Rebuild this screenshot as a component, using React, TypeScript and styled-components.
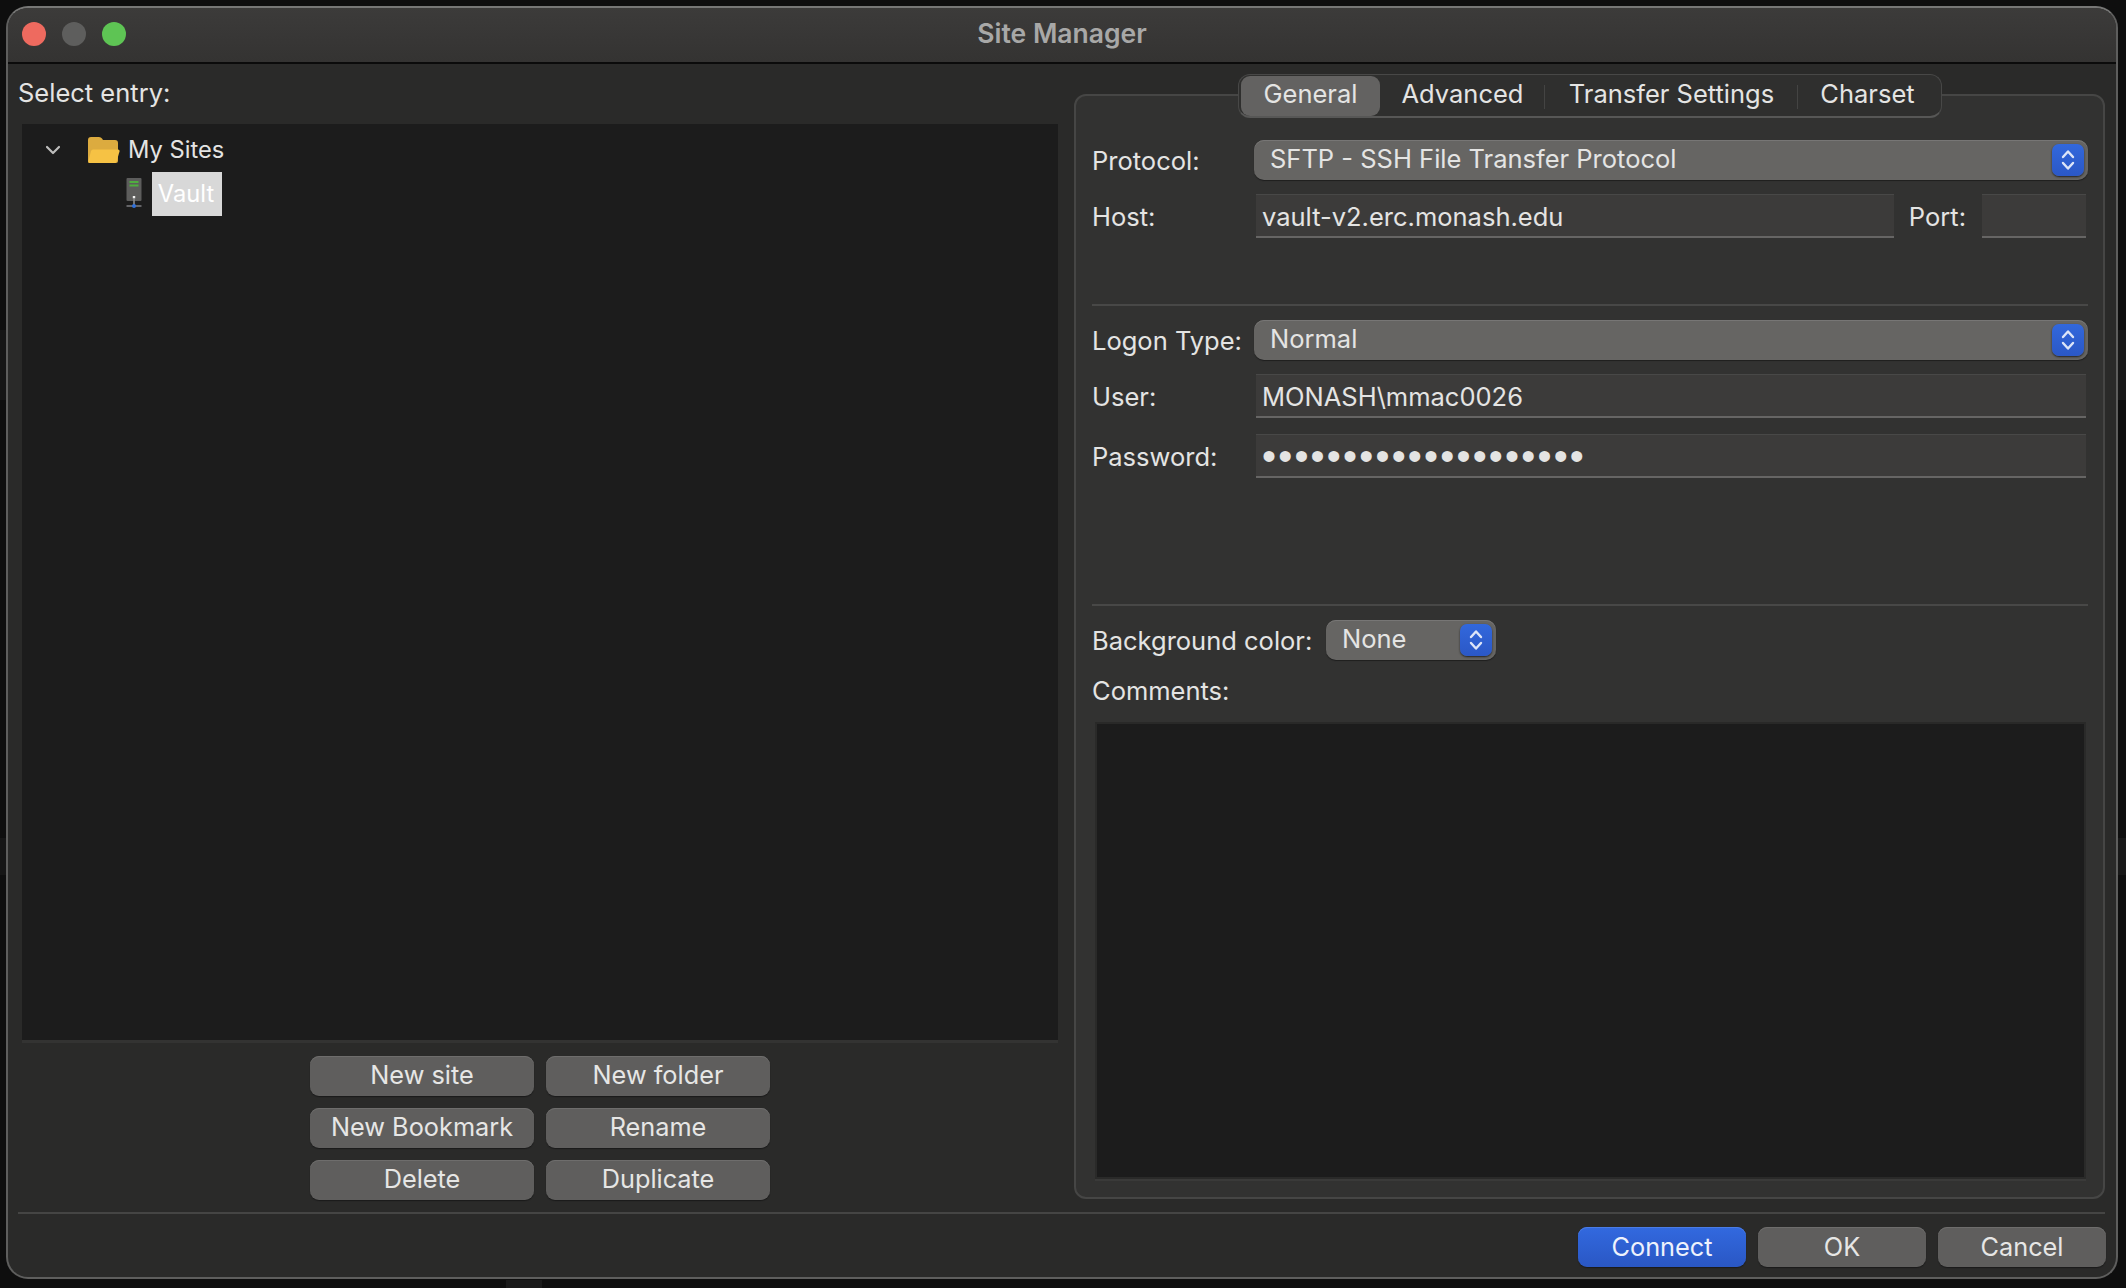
import React from "react";
import styled, { createGlobalStyle } from "styled-components";

const Global = createGlobalStyle`
  html, body { margin: 0; padding: 0; background: #0e0e0e; }
  * { box-sizing: border-box; }
  #root { width: 2126px; height: 1288px; }
`;

const Desktop = styled.div`
  width: 2126px;
  height: 1288px;
  padding: 6px 8px 9px 6px;
  background:
    linear-gradient(#181818, #181818) 2118px 330px / 8px 70px no-repeat,
    linear-gradient(#181818, #181818) 2118px 838px / 8px 37px no-repeat,
    linear-gradient(#161616, #161616) 0 330px / 6px 70px no-repeat,
    linear-gradient(#161616, #161616) 0 838px / 6px 37px no-repeat,
    linear-gradient(#1a1a1a, #1a1a1a) 506px 1280px / 36px 8px no-repeat,
    #0e0e0e;
  font-family: "Inter", "Liberation Sans", sans-serif;
  font-size: 25.5px;
  color: #e4e4e3;
`;

const Window = styled.div`
  height: 100%;
  display: flex;
  flex-direction: column;
  background: #2a2a29;
  border-radius: 22px;
  border: 2px solid #5e5e5d;
  border-top-color: #777776;
  overflow: hidden;
`;

const TitleBar = styled.header`
  height: 56px;
  flex: none;
  position: relative;
  display: flex;
  align-items: center;
  justify-content: center;
  padding-bottom: 5px;
  background: linear-gradient(#3c3b3a, #343332);
  border-bottom: 2px solid #0b0b0b;
`;

const Lights = styled.div`
  position: absolute;
  left: 14px;
  top: 14px;
  display: flex;
  gap: 16px;
`;

const Light = styled.span<{ $c: string }>`
  width: 24px;
  height: 24px;
  border-radius: 50%;
  background: ${(p) => p.$c};
`;

const Title = styled.h1`
  margin: 0;
  font-size: 26.5px;
  font-weight: 600;
  color: #a8a8a7;
`;

const Main = styled.div`
  flex: 1;
  min-height: 0;
  display: flex;
`;

const LeftColumn = styled.section`
  width: 1052px;
  flex: none;
  display: flex;
  flex-direction: column;
  padding: 14px 0 0 10px;
`;

const Caption = styled.div`
  height: 30px;
  line-height: 30px;
`;

const Tree = styled.div`
  flex: 1;
  margin: 16px 0 0 4px;
  width: 1036px;
  padding-top: 4px;
  background: #1c1c1c;
  box-shadow: 0 3px 0 #333332;
  font-size: 23.7px;
`;

const TreeRow = styled.div<{ $indent: number }>`
  height: 44px;
  display: flex;
  align-items: center;
  line-height: 42px;
  padding-left: ${(p) => p.$indent}px;
`;

const Chevron = styled.svg`
  width: 16px;
  height: 10px;
  margin-right: 27px;
`;

const FolderIcon = styled.svg`
  width: 32px;
  height: 26px;
  margin-right: 8px;
`;

const ServerIcon = styled.svg`
  width: 16px;
  height: 32px;
  margin-right: 10px;
`;

const Selected = styled.span`
  width: 70px;
  height: 44px;
  padding-right: 2px;
  text-align: center;
  line-height: 44px;
  background: #d8d8d8;
  color: #fff;
`;

const ButtonGrid = styled.div`
  display: grid;
  grid-template-columns: 224px 224px;
  grid-auto-rows: 40px;
  gap: 12px;
  margin: 16px 0 12px 292px;
`;

const Button = styled.button<{ $primary?: boolean }>`
  height: 40px;
  border: 0;
  padding: 0 0 3px;
  border-radius: 9px;
  font: inherit;
  font-size: 25.3px;
  color: ${(p) => (p.$primary ? "#eef2fc" : "#e6e6e5")};
  background: ${(p) => (p.$primary ? "linear-gradient(#3269df, #2a57c4)" : "#5f5e5d")};
  box-shadow: inset 0 1px 0 ${(p) => (p.$primary ? "#4a7ce6" : "#6e6d6c")}, 0 1px 1px #1a1a1a;
`;

const FooterButton = styled(Button)`
  padding: 0 0 1px;
`;

const RightColumn = styled.section`
  flex: 1;
  min-width: 0;
  display: flex;
  padding: 30px 11px 13px 14px;
`;

const TabBox = styled.div`
  flex: 1;
  min-width: 0;
  display: flex;
  flex-direction: column;
  padding: 0 15px 18px 16px;
  background: #323231;
  border: 2px solid #464645;
  border-radius: 12px;
`;

const Tabs = styled.nav`
  align-self: center;
  height: 44px;
  margin-top: -22px;
  padding: 2px 4px 2px 2px;
  display: flex;
  align-items: center;
  background: #2f2f2e;
  border: 1px solid #484847;
  border-bottom: 2px solid #575756;
  border-radius: 12px;
`;

const Tab = styled.span<{ $active?: boolean; $width: number; $divider?: boolean }>`
  position: relative;
  width: ${(p) => p.$width}px;
  height: 40px;
  line-height: 36px;
  text-align: center;
  border-radius: 9px;
  background: ${(p) => (p.$active ? "#636261" : "transparent")};
  &::after {
    content: "";
    display: ${(p) => (p.$divider ? "block" : "none")};
    position: absolute;
    right: 0;
    top: 9px;
    height: 24px;
    width: 1px;
    background: #444443;
  }
`;

const FormRow = styled.div<{ $top?: number }>`
  display: flex;
  align-items: center;
  margin-top: ${(p) => p.$top ?? 0}px;
`;

const Label = styled.label<{ $width?: number }>`
  flex: none;
  width: ${(p) => p.$width ?? 162}px;
  padding-top: 1px;
`;

const Select = styled.div<{ $width?: number }>`
  flex: ${(p) => (p.$width ? "none" : "1")};
  width: ${(p) => (p.$width ? `${p.$width}px` : "auto")};
  height: 40px;
  padding: 0 4px 0 16px;
  display: flex;
  align-items: center;
  justify-content: space-between;
  border-radius: 10px;
  background: #666563;
  box-shadow: inset 0 1px 0 #777675, 0 1px 1px #1e1e1e;
  line-height: 36px;
`;

const SelectText = styled.span`
  margin-top: -3px;
`;

const Stepper = styled.span`
  width: 32px;
  height: 32px;
  flex: none;
  display: flex;
  align-items: center;
  justify-content: center;
  border-radius: 7px;
  background: linear-gradient(#3268dc, #2b58c6);
  box-shadow: 0 1px 2px #222;
`;

const StepperIcon = styled.svg`
  width: 16px;
  height: 24px;
`;

const Input = styled.div<{ $width?: number }>`
  flex: ${(p) => (p.$width ? "none" : "1")};
  width: ${(p) => (p.$width ? `${p.$width}px` : "auto")};
  height: 44px;
  margin: 0 2px;
  padding-left: 6px;
  line-height: 43px;
  background: #3c3b3a;
  border-top: 1px solid #484847;
  border-bottom: 2px solid #666564;
`;

const Bullets = styled.span`
  font-family: "Liberation Sans", sans-serif;
  font-size: 40px;
  letter-spacing: 2.2px;
  line-height: 43px;
  vertical-align: top;
`;

const PortLabel = styled.label`
  flex: none;
  padding-top: 1px;
  margin: 0 14px 0 13px;
`;

const Divider = styled.hr<{ $top: number }>`
  width: 100%;
  height: 2px;
  margin: ${(p) => p.$top}px 0 0;
  border: 0;
  background: #484847;
`;

const CommentsLabel = styled.div`
  height: 30px;
  line-height: 30px;
  margin-top: 16px;
`;

const Comments = styled.div`
  flex: 1;
  margin: 16px 2px 0 3px;
  background: #1c1c1c;
  border: 2px solid #2a2a29;
  border-top-color: #292928;
  box-shadow: 0 2px 0 #3a3a39;
`;

const FooterRule = styled.hr`
  height: 2px;
  flex: none;
  margin: 0 11px 0 10px;
  border: 0;
  background: #454544;
`;

const Footer = styled.footer`
  flex: none;
  display: grid;
  grid-template-columns: repeat(3, 168px);
  gap: 12px;
  justify-content: end;
  padding: 13px 10px 10px 0;
`;

const UpDown = () => (
  <StepperIcon viewBox="0 0 16 24" fill="none" stroke="#dde5f8" strokeWidth="2.4" strokeLinecap="round" strokeLinejoin="round">
    <path d="M3 9 L8 3.5 L13 9" />
    <path d="M3 15 L8 20.5 L13 15" />
  </StepperIcon>
);

export default function App() {
  return (
    <Desktop>
      <Global />
      <Window>
        <TitleBar>
          <Lights>
            <Light $c="#ee6a5f" />
            <Light $c="#5e5e5d" />
            <Light $c="#5ec454" />
          </Lights>
          <Title>Site Manager</Title>
        </TitleBar>
        <Main>
          <LeftColumn>
            <Caption>Select entry:</Caption>
            <Tree>
              <TreeRow $indent={23}>
                <Chevron viewBox="0 0 16 10" fill="none" stroke="#bdbdbc" strokeWidth="2.2" strokeLinecap="round" strokeLinejoin="round">
                  <path d="M2 2 L8 8 L14 2" />
                </Chevron>
                <FolderIcon viewBox="0 0 32 26">
                  <path d="M0 3 Q0 0 3 0 H11 Q13 0 14 1.5 L15 3 H27 Q30 3 30 6 V24 Q30 26 28 26 H2 Q0 26 0 24 Z" fill="#dcab3f" />
                  <path d="M3 14 Q3.6 12.5 5 12.5 H30 Q32 12.5 31.5 14.5 L28.6 24.5 Q28 26 26.5 26 H1.5 Q0 26 0.3 24.5 Z" fill="#f6c244" />
                </FolderIcon>
                My Sites
              </TreeRow>
              <TreeRow $indent={104}>
                <ServerIcon viewBox="0 0 16 32">
                  <rect x="0.5" y="0" width="15" height="23" rx="1" fill="#5d5d5c" />
                  <rect x="3.5" y="3" width="9" height="2" fill="#4fae3f" />
                  <rect x="3.5" y="6.5" width="9" height="2" fill="#4fae3f" />
                  <rect x="6.8" y="18" width="2.4" height="2.4" fill="#f2f2f2" />
                  <rect x="7.2" y="20.5" width="1.6" height="8" fill="#8a8a8a" />
                  <rect x="0.5" y="27.2" width="15" height="1.6" fill="#77777a" />
                  <circle cx="8" cy="28" r="2" fill="#2f6fd8" />
                </ServerIcon>
                <Selected>Vault</Selected>
              </TreeRow>
            </Tree>
            <ButtonGrid>
              <Button>New site</Button>
              <Button>New folder</Button>
              <Button>New Bookmark</Button>
              <Button>Rename</Button>
              <Button>Delete</Button>
              <Button>Duplicate</Button>
            </ButtonGrid>
          </LeftColumn>
          <RightColumn>
            <TabBox>
              <Tabs>
                <Tab $active $width={139}>General</Tab>
                <Tab $width={165} $divider>Advanced</Tab>
                <Tab $width={253} $divider>Transfer Settings</Tab>
                <Tab $width={139}>Charset</Tab>
              </Tabs>
              <FormRow $top={22}>
                <Label>Protocol:</Label>
                <Select><SelectText>SFTP - SSH File Transfer Protocol</SelectText><Stepper><UpDown /></Stepper></Select>
              </FormRow>
              <FormRow $top={14}>
                <Label>Host:</Label>
                <Input>vault-v2.erc.monash.edu</Input>
                <PortLabel>Port:</PortLabel>
                <Input $width={104} />
              </FormRow>
              <Divider $top={66} />
              <FormRow $top={14}>
                <Label>Logon Type:</Label>
                <Select><SelectText>Normal</SelectText><Stepper><UpDown /></Stepper></Select>
              </FormRow>
              <FormRow $top={14}>
                <Label>User:</Label>
                <Input>MONASH\mmac0026</Input>
              </FormRow>
              <FormRow $top={16}>
                <Label>Password:</Label>
                <Input><Bullets>••••••••••••••••••••</Bullets></Input>
              </FormRow>
              <Divider $top={126} />
              <FormRow $top={14}>
                <Label $width={234}>Background color:</Label>
                <Select $width={170}><SelectText>None</SelectText><Stepper><UpDown /></Stepper></Select>
              </FormRow>
              <CommentsLabel>Comments:</CommentsLabel>
              <Comments />
            </TabBox>
          </RightColumn>
        </Main>
        <FooterRule />
        <Footer>
          <FooterButton $primary>Connect</FooterButton>
          <FooterButton>OK</FooterButton>
          <FooterButton>Cancel</FooterButton>
        </Footer>
      </Window>
    </Desktop>
  );
}
